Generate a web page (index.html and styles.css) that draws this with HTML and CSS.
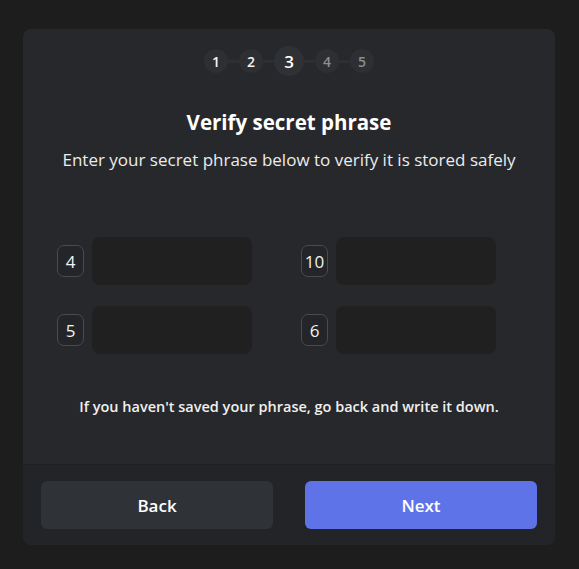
FILE: index.html
```html
<!DOCTYPE html>
<html lang="en">
<head>
<meta charset="utf-8">
<title>Verify secret phrase</title>
<link rel="stylesheet" href="styles.css">
</head>
<body>
<div class="card">
  <div class="content">
    <div class="stepper">
      <span class="step done">1</span>
      <span class="line"></span>
      <span class="step done">2</span>
      <span class="line"></span>
      <span class="step current">3</span>
      <span class="line"></span>
      <span class="step todo">4</span>
      <span class="line"></span>
      <span class="step todo">5</span>
    </div>
    <h1 class="title">Verify secret phrase</h1>
    <p class="subtitle">Enter your secret phrase below to verify it is stored safely</p>
    <div class="grid">
      <div class="field"><span class="num">4</span><input class="word" type="text"></div>
      <div class="field"><span class="num">10</span><input class="word" type="text"></div>
      <div class="field"><span class="num">5</span><input class="word" type="text"></div>
      <div class="field"><span class="num">6</span><input class="word" type="text"></div>
    </div>
    <p class="note">If you haven't saved your phrase, go back and write it down.</p>
  </div>
  <div class="footer">
    <button class="btn back">Back</button>
    <button class="btn next">Next</button>
  </div>
</div>
</body>
</html>
```

FILE: styles.css
```css
* { box-sizing: border-box; }
html, body { margin: 0; padding: 0; }
body {
  background: #1d1d1e;
  font-family: "Open Sans", "Noto Sans", sans-serif;
  color: #f2f2f2;
  padding: 29px 24px 24px 23px;
}
.card {
  width: 532px;
  height: 516px;
  background: #27282b;
  border-radius: 8px;
  display: flex;
  flex-direction: column;
  overflow: hidden;
}
.content {
  flex: 1;
  display: flex;
  flex-direction: column;
  align-items: center;
  padding-top: 17px;
}
.stepper {
  display: flex;
  align-items: center;
  height: 30px;
}
.step {
  display: flex;
  align-items: center;
  justify-content: center;
  border-radius: 50%;
  background: #2d2f32;
  font-size: 14px;
  font-weight: 600;
  width: 24px;
  height: 24px;
}
.step.done { color: #f4f4f4; }
.step.current { width: 30px; height: 30px; font-size: 17px; color: #ffffff; background: #2f3134; }
.step.todo { color: #8c8d90; }
.line { width: 11px; height: 3px; background: #2d2f32; }
.title {
  margin: 33px 0 0;
  font-size: 20.5px;
  font-weight: 700;
  color: #ffffff;
  line-height: 26px;
}
.subtitle {
  margin: 13px 0 0;
  font-size: 17px;
  line-height: 23px;
  color: #ececec;
}
.grid {
  margin-top: 66px;
  display: grid;
  grid-template-columns: 195px 195px;
  column-gap: 49px;
  row-gap: 21px;
  align-self: flex-start;
  margin-left: 34px;
}
.field {
  display: flex;
  align-items: center;
  gap: 8px;
}
.num {
  width: 27px;
  height: 32px;
  border: 1px solid #4a4b4e;
  border-radius: 7px;
  background: #242528;
  display: flex;
  align-items: center;
  justify-content: center;
  font-size: 17px;
  color: #f2f2f2;
}
.word {
  width: 160px;
  height: 48px;
  background: #202021;
  border: none;
  border-radius: 8px;
  outline: none;
  color: #fff;
  font: inherit;
}
.note {
  margin: 43px 0 0;
  font-size: 14.5px;
  font-weight: 600;
  color: #f0f0f0;
  line-height: 20px;
}
.footer {
  height: 81px;
  background: #232427;
  border-top: 1px solid #1f2022;
  display: flex;
  gap: 32px;
  padding: 16px 18px 0;
}
.btn {
  width: 232px;
  height: 48px;
  border: none;
  border-radius: 6px;
  font-family: inherit;
  font-size: 17px;
  font-weight: 600;
  color: #ffffff;
}
.back { background: #2f3236; }
.next { background: #5f73e9; }
```
